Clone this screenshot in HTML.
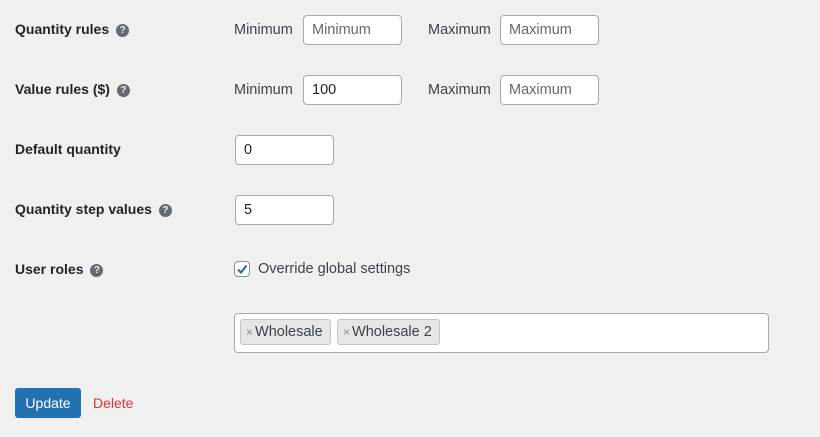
<!DOCTYPE html>
<html><head><style>
body{margin:0;width:820px;height:437px;background:#f0f0f1;font-family:"Liberation Sans",sans-serif;color:#1d2327;position:relative;overflow:hidden}
.a{position:absolute}
.lbl{font-size:14px;font-weight:bold;line-height:16px}
.q{display:inline-block;width:13px;height:13px;border-radius:50%;background:#646970;color:#f0f0f1;font-size:10px;line-height:13px;text-align:center;font-weight:bold;vertical-align:1px;margin-left:7px}
.t{font-size:14.5px;line-height:16px;color:#3c434a}
.in{background:#fff;border:1px solid #a7aaad;border-radius:4px;box-sizing:border-box;font-size:14.5px;padding-left:8px;line-height:28px;color:#1d2327}
.ph{color:#646970}
.tag{background:#e6e6e6;border:1px solid #c3c4c7;border-radius:3px;box-sizing:border-box;height:26px;line-height:25px;font-size:14.5px;padding:0 5px;color:#3c434a}
.tag span{font-size:12px;color:#8c8f94;margin-right:2px}
</style></head><body>
<div class="a lbl" style="left:15px;top:21px">Quantity rules<span class="q">?</span></div>
<div class="a t" style="left:234px;top:22px">Minimum</div>
<div class="a in ph" style="left:303px;top:15px;width:99px;height:30px">Minimum</div>
<div class="a t" style="left:428px;top:22px">Maximum</div>
<div class="a in ph" style="left:500px;top:15px;width:99px;height:30px">Maximum</div>

<div class="a lbl" style="left:15px;top:81px">Value rules ($)<span class="q">?</span></div>
<div class="a t" style="left:234px;top:82px">Minimum</div>
<div class="a in" style="left:303px;top:75px;width:99px;height:30px">100</div>
<div class="a t" style="left:428px;top:82px">Maximum</div>
<div class="a in ph" style="left:500px;top:75px;width:99px;height:30px">Maximum</div>

<div class="a lbl" style="left:15px;top:141px">Default quantity</div>
<div class="a in" style="left:235px;top:135px;width:99px;height:30px">0</div>

<div class="a lbl" style="left:15px;top:201px">Quantity step values<span class="q">?</span></div>
<div class="a in" style="left:235px;top:195px;width:99px;height:30px">5</div>

<div class="a lbl" style="left:15px;top:261px">User roles<span class="q">?</span></div>
<div class="a" style="left:234px;top:261px;width:16px;height:16px;background:#fff;border:1px solid #8c8f94;border-radius:4px;box-sizing:border-box">
<svg width="14" height="14" viewBox="0 0 14 14" style="position:absolute;left:0;top:0"><path d="M3 7.5 L6 10.5 L11.5 3.5" stroke="#2271b1" stroke-width="2.2" fill="none"/></svg></div>
<div class="a t" style="left:258px;top:261px">Override global settings</div>

<div class="a" style="left:234px;top:313px;width:535px;height:40px;background:#fff;border:1px solid #a7aaad;border-radius:4px;box-sizing:border-box"></div>
<div class="a tag" style="left:240px;top:319px;width:91px"><span>×</span>Wholesale</div>
<div class="a tag" style="left:337px;top:319px;width:103px"><span>×</span>Wholesale 2</div>

<div class="a" style="left:15px;top:388px;width:66px;height:30px;background:#2271b1;border-radius:3px;color:#fff;font-size:14px;line-height:30px;text-align:center">Update</div>
<div class="a" style="left:93px;top:395px;font-size:14px;color:#d63638;line-height:16px">Delete</div>
</body></html>
